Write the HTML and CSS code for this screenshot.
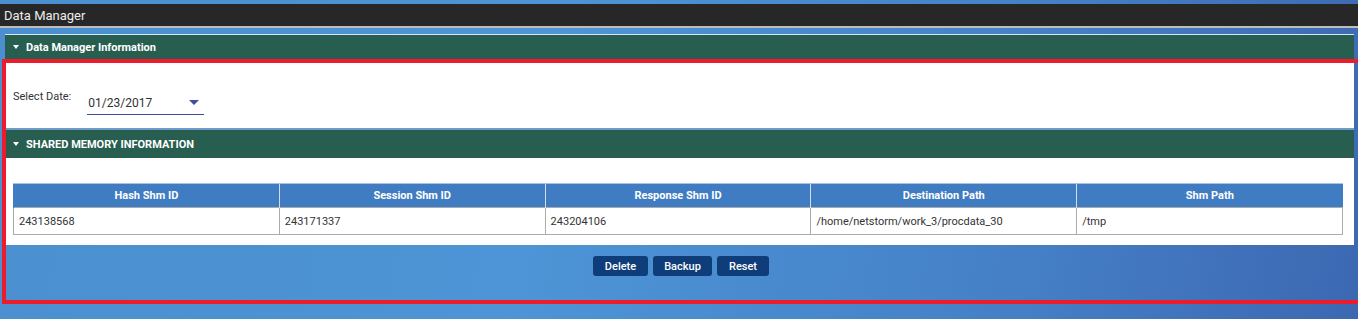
FILE: index.html
```html
<!DOCTYPE html>
<html lang="en">
<head>
  <meta charset="UTF-8" />
  <title>Data Manager</title>
  <link rel="stylesheet" href="styles.css">
</head>
<body>

  <div class="title-bar">Data Manager</div>

  <div class="panel">
    <div class="panel-head">
      <span class="caret"></span>Data Manager Information
    </div>
    <div class="panel-body date-body">
      <label class="date-label">Select Date:</label>
      <div class="date-field">
        <span>01/23/2017</span>
        <span class="drop"></span>
      </div>
    </div>

    <div class="panel-head shm-head">
      <span class="caret"></span>SHARED MEMORY INFORMATION
    </div>
    <div class="panel-body shm-body">
      <table class="shm-table">
        <thead>
          <tr>
            <th>Hash Shm ID</th>
            <th>Session Shm ID</th>
            <th>Response Shm ID</th>
            <th>Destination Path</th>
            <th>Shm Path</th>
          </tr>
        </thead>
        <tbody>
          <tr>
            <td>243138568</td>
            <td>243171337</td>
            <td>243204106</td>
            <td>/home/netstorm/work_3/procdata_30</td>
            <td>/tmp</td>
          </tr>
        </tbody>
      </table>
    </div>
  </div>

  <div class="actions">
    <button class="btn btn-delete">Delete</button>
    <button class="btn btn-backup">Backup</button>
    <button class="btn btn-reset">Reset</button>
  </div>

  <!-- highlight frame drawn over the page -->
  <div class="highlight"></div>

</body>
</html>
```

FILE: styles.css
```css
* {
  margin: 0;
  padding: 0;
  box-sizing: border-box;
  font-family: Roboto, 'Liberation Sans', sans-serif;
}

body {
  width: 1358px;
  height: 319px;
  overflow: hidden;
  position: relative;
  padding-top: 4px;
  background: linear-gradient(100deg, #4b8fd0 0%, #4d95d6 40%, #4580c6 75%, #3c68b2 100%);
}

.title-bar {
  height: 24px;
  background-color: #272727;
  border-bottom: 2px solid #bdbdbd;
  color: #ececec;
  font-size: 13px;
  line-height: 24px;
  padding-left: 4px;
}

.panel {
  margin: 6px 4px 0 5px;
  border-top: 1px solid #d6e6f6;
}

.panel-head {
  height: 24px;
  background-color: #285e4f;
  color: #fff;
  font-size: 11px;
  font-weight: bold;
  display: flex;
  align-items: center;
  padding-left: 8px;
}

.caret {
  width: 0;
  height: 0;
  border-left: 3px solid transparent;
  border-right: 3px solid transparent;
  border-top: 4px solid #fff;
  margin-right: 7px;
}

.panel-body {
  background-color: #fff;
}

.date-body {
  height: 71px;
  display: flex;
  align-items: center;
  padding: 10px 0 0 8px;
  border-bottom: 2px solid #6f9bcb;
}

.date-label {
  font-size: 11px;
  color: #333;
  margin-right: 16px;
  margin-top: -4px;
}

.date-field {
  width: 117px;
  height: 24px;
  border-bottom: 1px solid #3d4ea3;
  display: flex;
  align-items: center;
  justify-content: space-between;
  padding: 0 5px 0 1px;
  font-size: 12px;
  color: #333;
  margin-top: 9px;
}

.drop {
  width: 0;
  height: 0;
  border-left: 5px solid transparent;
  border-right: 5px solid transparent;
  border-top: 5px solid #3d4ea3;
}

.shm-head {
  height: 28px;
}

.shm-body {
  height: 87px;
  padding: 25px 11px 0 8px;
}

.shm-table {
  width: 100%;
  border-collapse: collapse;
  table-layout: fixed;
  font-size: 11px;
}

.shm-table th {
  background-color: #3f7cc1;
  color: #fff;
  height: 24px;
  font-weight: bold;
  border-left: 1px solid #d0dff0;
  border-top: 1px solid #a9c4e2;
}

.shm-table th:first-child {
  border-left: 1px solid #3f7cc1;
}

.shm-table td {
  height: 27px;
  color: #333;
  padding-left: 5px;
  border: 1px solid #ababab;
}

.actions {
  display: flex;
  justify-content: center;
  gap: 5px;
  margin-top: 11px;
  padding-left: 4px;
}

.btn {
  height: 20px;
  background-color: #0f3d7a;
  color: #fff;
  border: none;
  border-radius: 3px;
  font-size: 11px;
  font-weight: 500;
}

.btn-delete {
  width: 55px;
}

.btn-backup {
  width: 59px;
}

.btn-reset {
  width: 52px;
}

.highlight {
  position: absolute;
  left: 2px;
  top: 59px;
  width: 1360px;
  height: 245px;
  border: 4px solid #ec1c2c;
}
```
